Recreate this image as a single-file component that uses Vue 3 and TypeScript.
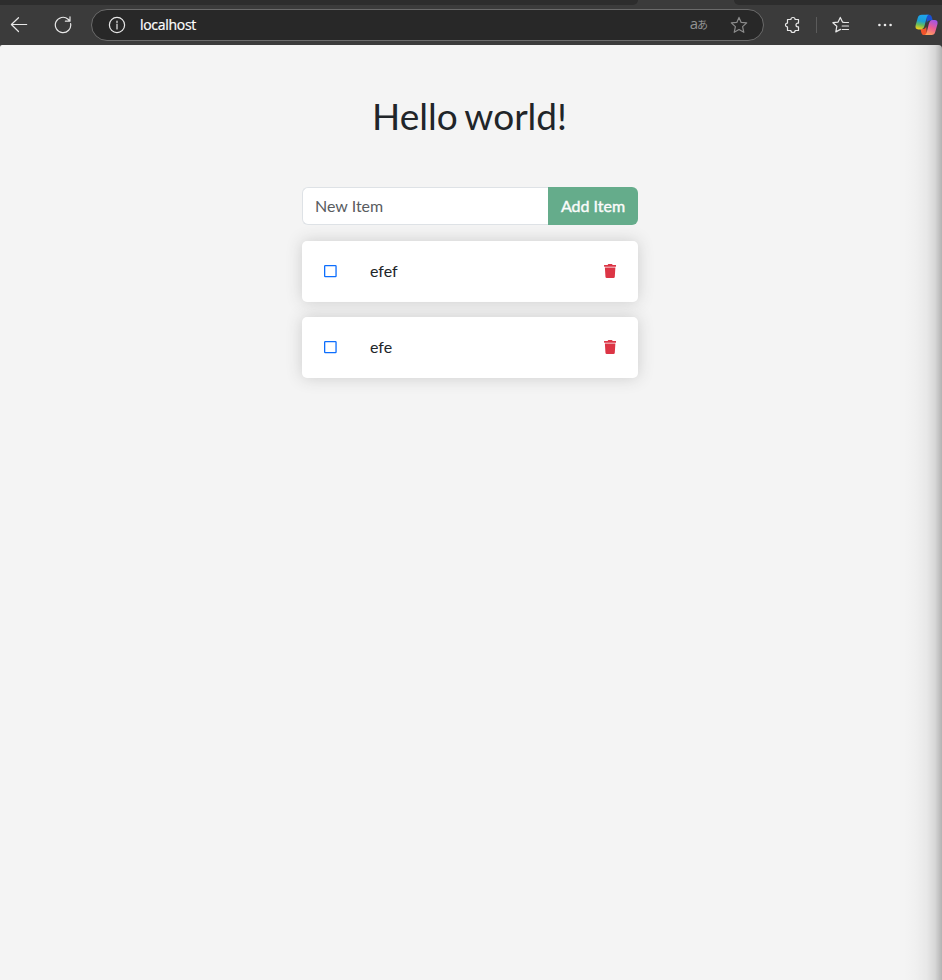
<script setup lang="ts">
import { ref } from 'vue'

interface Item {
  id: number
  name: string
}

const items = ref<Item[]>([
  { id: 1, name: 'efef' },
  { id: 2, name: 'efe' },
])
const draft = ref('')

function addItem(): void {
  const name = draft.value.trim()
  if (!name) return
  items.value.push({ id: Date.now(), name })
  draft.value = ''
}

function removeItem(id: number): void {
  items.value = items.value.filter((item) => item.id !== id)
}
</script>

<template>
  <div class="window">
    <header class="browser">
      <div class="tabstrip">
        <div class="strip-left"></div>
        <div class="strip-right"></div>
      </div>
      <div class="toolbar">
        <svg class="ic back" width="18" height="18" viewBox="0 0 18 18">
          <path d="M16.7 8.500H1.700M8.500 1.700L1.400 8.500L8.500 15.500" />
        </svg>
        <svg class="ic reload" width="18" height="18" viewBox="0 0 18 18">
          <path d="M16.600 7.600A7.700 7.700 0 1 1 14.100 3.200L16 5M16 .8V5.200H11.400" />
        </svg>
        <div class="address">
          <svg class="ic info" width="18" height="18" viewBox="0 0 18 18">
            <circle cx="9" cy="9" r="7.600" />
            <path d="M9 8v5M9 5v1.400" />
          </svg>
          <span class="url">localhost</span>
          <span class="translate"><span class="latin">a</span><span class="kana">あ</span></span>
          <svg class="ic star" width="18" height="18" viewBox="0 0 18 18">
            <path d="M9 1.400l2.200 5 5.500.5-4.100 3.700 1.200 5.700L9 13.600l-4.800 2.700 1.200-5.700L1.300 6.900l5.500-.5z" />
          </svg>
        </div>
        <svg class="ic puzzle" width="18" height="18" viewBox="0 0 18 18">
          <path d="M3.500 3.500h3.400a2.100 2 0 0 1 4.200 0h3.400v3.600h-.6a1.900 1.900 0 0 0 0 3.800h.6v3.600h-3.400a2.100 2 0 0 1-4.200 0H3.500v-3.600a2 1.900 0 0 1 0-3.800z" />
        </svg>
        <div class="divider"></div>
        <svg class="ic favorites" width="18" height="18" viewBox="0 0 18 18">
          <path d="M12 6.300L10.500 6.100 8.300 1.400 6.100 6.100.9 6.700 4.800 10.300 3.800 15.900 8.500 13.400M11 6.500H16.500M10.200 10H16.500M10.200 13.500H16.500" />
        </svg>
        <svg class="dots" width="16" height="4" viewBox="0 0 16 4">
          <circle cx="2.400" cy="2" r="1.300" />
          <circle cx="8" cy="2" r="1.300" />
          <circle cx="13.600" cy="2" r="1.300" />
        </svg>
        <svg class="copilot" width="23" height="22" viewBox="0 0 23 22">
          <defs>
            <linearGradient id="cool" x1=".6" y1="0" x2=".4" y2="1">
              <stop offset="0" stop-color="#1fa4f0" />
              <stop offset=".45" stop-color="#1ba0d4" />
              <stop offset=".7" stop-color="#62bb60" />
              <stop offset="1" stop-color="#f0cf1c" />
            </linearGradient>
            <linearGradient id="warm" x1=".7" y1="0" x2=".3" y2="1">
              <stop offset="0" stop-color="#a355e6" />
              <stop offset=".5" stop-color="#ed5d92" />
              <stop offset="1" stop-color="#ffa35c" />
            </linearGradient>
          </defs>
          <path fill="#1b50d2" d="M11 .8h2.800c2 0 2.600 1 3.100 2.600l.9 3h-3c-1.600 0-2.500.8-3 2.500z" />
          <path fill="#f0532b" d="M12 21H9.500c-2 0-2.800-1-3.200-2.600l-.7-3.400h2.600c1.700 0 2.500-.8 3-2.400z" />
          <path fill="url(#cool)" d="M6.800.8h7.400c-1.700 0-2.100 1.300-2.700 3.400L9.600 11.500c-.6 2.300-1.600 3.900-3.900 3.900H3.300c-2.500 0-3.300-1.600-2.600-4.300l2-7C3.300 1.900 4.600.8 6.800.8z" />
          <path fill="url(#warm)" d="M16.500 21H9.200c1.700 0 2.100-1.300 2.700-3.400l1.900-7.500c.6-2.300 1.600-4 3.800-4h2.100c2.500 0 3.400 1.800 2.600 4.600l-2 7c-.6 2.200-1.600 3.300-3.800 3.300z" />
        </svg>
      </div>
    </header>

    <main class="page">
      <h1>Hello world!</h1>
      <form class="entry" @submit.prevent="addItem">
        <input v-model="draft" type="text" placeholder="New Item" aria-label="New item" />
        <button type="submit" :class="{ disabled: !draft }">Add Item</button>
      </form>
      <div v-for="item in items" :key="item.id" class="item">
        <svg class="check" width="13" height="14" viewBox="0 0 13 14">
          <path fill-rule="evenodd" d="M1.300 1H11.400a1.300 1.300 0 0 1 1.300 1.300V12a1.300 1.300 0 0 1-1.300 1.300H1.300A1.300 1.300 0 0 1 0 12V2.300A1.300 1.300 0 0 1 1.300 1zM1.300 2.200V12H11.400V2.200z" />
        </svg>
        <span class="name">{{ item.name }}</span>
        <svg class="trash" width="12.250" height="14" viewBox="0 0 448 512" @click="removeItem(item.id)">
          <path d="M432 32H312l-9.400-18.700A24 24 0 0 0 281.100 0H166.800a23.700 23.700 0 0 0-21.400 13.300L136 32H16A16 16 0 0 0 0 48v32a16 16 0 0 0 16 16h416a16 16 0 0 0 16-16V48a16 16 0 0 0-16-16zM53.200 467a48 48 0 0 0 47.900 45h245.800a48 48 0 0 0 47.900-45L416 128H32z" />
        </svg>
      </div>
    </main>
  </div>
</template>

<style>
body {
  margin: 0;
  background: #3b3b3b;
}
</style>

<style scoped>
.window {
  height: 980px;
  display: flex;
  flex-direction: column;
  overflow: hidden;
  background: #3b3b3b;
  font-family: Lato, sans-serif;
}
.window * {
  box-sizing: border-box;
}
.browser {
  height: 45px;
  flex: none;
}
.tabstrip {
  height: 5px;
  display: flex;
  justify-content: space-between;
}
.strip-left {
  width: 638px;
  background: #2d2d2d;
  border-bottom-right-radius: 5px;
}
.strip-right {
  width: 208px;
  background: #2d2d2d;
  border-bottom-left-radius: 5px;
}
.toolbar {
  height: 40px;
  display: flex;
  align-items: center;
  padding-left: 10px;
}
.toolbar > * {
  flex: none;
}
.ic {
  fill: none;
  stroke: #e8e8e8;
  stroke-width: 1.2;
  stroke-linejoin: round;
  stroke-linecap: round;
}
.reload {
  margin-left: 26px;
}
.address {
  width: 673px;
  height: 32px;
  margin-left: 19px;
  padding: 0 15px 0 16px;
  display: flex;
  align-items: center;
  border: 1px solid #6b6b6b;
  border-radius: 16px;
  background: #282828;
}
.url {
  margin-left: 14px;
  color: #fff;
  font: 14px/20px "Open Sans", "Noto Sans", sans-serif;
  letter-spacing: -0.3px;
  -webkit-text-stroke: 0.2px #fff;
}
.translate {
  margin-left: auto;
  margin-right: 23px;
  padding-bottom: 3px;
  display: flex;
  align-items: baseline;
  color: #929292;
  line-height: 18px;
}
.latin {
  font-family: "Open Sans", sans-serif;
  font-size: 15px;
  margin-right: -1px;
}
.kana {
  font-family: "Noto Sans CJK JP", sans-serif;
  font-size: 11px;
  margin-right: -1px;
}
.star {
  stroke: #8b8b8b;
}
.puzzle {
  margin-left: 20px;
}
.divider {
  width: 1px;
  height: 16px;
  margin-left: 14px;
  background: #5b5b5b;
}
.favorites {
  margin-left: 15px;
}
.dots {
  margin-left: 27px;
  fill: #ececec;
}
.copilot {
  margin-left: 22px;
}
.page {
  flex: 1;
  position: relative;
  display: flex;
  flex-direction: column;
  align-items: center;
  padding: 47px 2px 0 0;
  border-radius: 2px 4px 0 0;
  overflow: hidden;
  background: #f4f4f4;
  color: #212529;
}
/* Soft shade along the right edge of the window */
.page::after {
  content: "";
  position: absolute;
  inset: 0 0 0 auto;
  width: 38px;
  pointer-events: none;
  background: linear-gradient(to right, transparent, rgba(0, 0, 0, 0.015) 30%, rgba(0, 0, 0, 0.05) 60%, rgba(0, 0, 0, 0.12) 82%, rgba(0, 0, 0, 0.27));
}
h1 {
  margin: 0 0 47px;
  padding-right: 1px;
  font-size: 37px;
  font-weight: 400;
  line-height: 48px;
  word-spacing: -2px;
}
.entry {
  width: 336px;
  height: 38px;
  margin-bottom: 16px;
  display: flex;
}
input {
  flex: 1;
  min-width: 0;
  padding: 0 12px;
  border: 1px solid #dee2e6;
  border-right: 0;
  border-radius: 6px 0 0 6px;
  background: #fff;
  color: #212529;
  font: 16px/24px Lato, sans-serif;
  outline: none;
}
input::placeholder {
  color: #595c5f;
  opacity: 1;
}
button {
  width: 90px;
  padding: 0;
  border: 0;
  border-radius: 0 6px 6px 0;
  background: #198754;
  color: #fff;
  font: 16px/24px Lato, sans-serif;
  -webkit-text-stroke: 0.4px #fff;
}
button.disabled {
  opacity: 0.65;
}
.item {
  width: 336px;
  height: 61px;
  margin-bottom: 15px;
  padding: 0 22px 1px;
  display: flex;
  align-items: center;
  border-radius: 5px;
  background: #fff;
  box-shadow: 0 0 1em #ccc;
  font-size: 16px;
}
.check {
  fill: #0d6efd;
}
.name {
  flex: 1;
  margin-left: 33px;
  line-height: 24px;
}
.trash {
  fill: #dc3545;
}
</style>
